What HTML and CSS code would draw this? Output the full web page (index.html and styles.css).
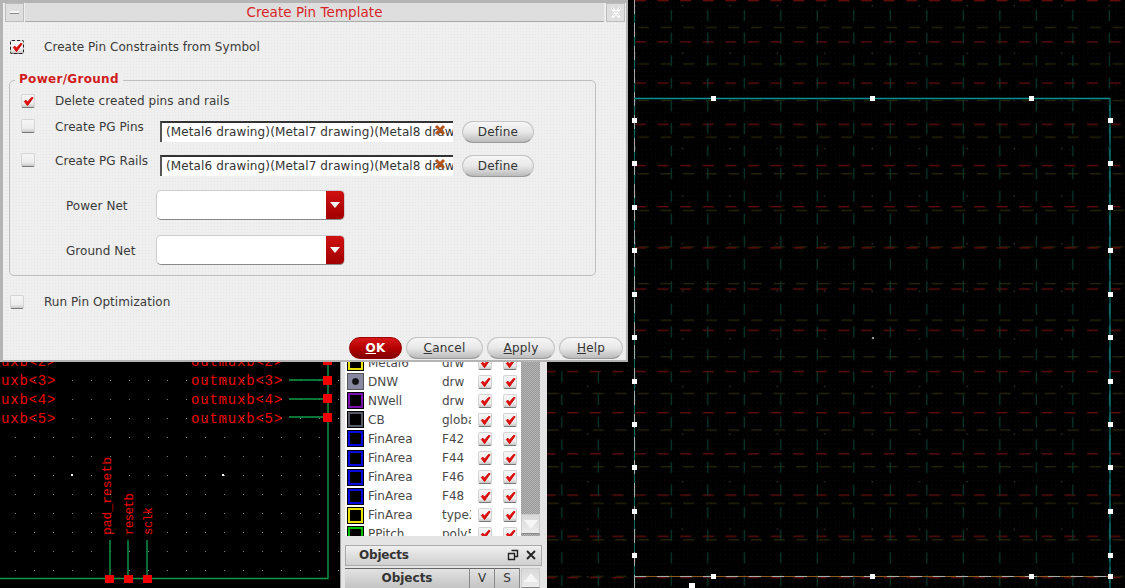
FILE: index.html
```html
<!DOCTYPE html>
<html lang="en">
<head>
<meta charset="utf-8">
<title>Create Pin Template</title>
<link rel="stylesheet" href="styles.css">
</head>
<body>
<svg width="0" height="0" class="defs">
  <defs>
    <symbol id="tick" viewBox="0 0 14 14"><path d="M2.5 7 L6 11.5 L12 3 L10.5 2.5 L6 7.5 L4 5.5 Z" fill="#e01010" stroke="#d00000" stroke-width=".9"/></symbol>
    <symbol id="cross" viewBox="0 0 12 12"><path d="M2 2 L10 10 M10 2 L2 10" stroke="#b5531c" stroke-width="3"/></symbol>
    <symbol id="arrow" viewBox="0 0 10 6"><path d="M0 0 H10 L5 6 Z" fill="#f4f4f4"/></symbol>
  </defs>
</svg>

<svg class="canvas canvas-right" width="578" height="588" viewBox="547 0 578 588">
  <defs>
    <pattern id="fine" width="4.6" height="4.6" patternUnits="userSpaceOnUse"><rect x="2" y="2" width="1" height="1" fill="#101010"/></pattern>
    <pattern id="red" width="22.6" height="41.2" patternUnits="userSpaceOnUse"><rect x="2.2" y="0" width="11" height="1.4" fill="#5e0c0c"/></pattern>
    <pattern id="olive" width="22.6" height="36.6" patternUnits="userSpaceOnUse"><rect x="5.2" y="27" width="11" height="1" fill="#33310a"/></pattern>
    <pattern id="green" width="36.5" height="22.6" patternUnits="userSpaceOnUse"><rect x="13.7" y="10" width="1.2" height="11" fill="#083a2e"/></pattern>
    <pattern id="spot" width="47.4" height="47.6" patternUnits="userSpaceOnUse"><rect x="18.4" y="5" width="1.2" height="1.2" fill="#444"/></pattern>
  </defs>
  <rect x="547" y="0" width="578" height="588" fill="#000"/>
  <rect x="547" y="0" width="578" height="588" fill="url(#fine)"/>
  <rect x="547" y="0" width="578" height="588" fill="url(#olive)"/>
  <rect x="547" y="0" width="578" height="588" fill="url(#red)"/>
  <rect x="547" y="0" width="578" height="588" fill="url(#green)"/>
  <rect x="547" y="0" width="578" height="588" fill="url(#spot)"/>
  <rect x="872" y="337" width="2" height="2" fill="#999"/>
  <path d="M634.5 0 V588" stroke="#0c6a60" stroke-width="1"/>
  <path d="M634.5 0 V588" stroke="#aaa" stroke-width="1" stroke-dasharray="14 9"/>
  <path d="M634 576.5 H1110" stroke="#8a5a20" stroke-width="1"/>
  <path d="M634 576.5 H1110" stroke="#aaa" stroke-width="1" stroke-dasharray="12 11"/>
  <path d="M634 98.5 H1110" stroke="#0e9090" stroke-width="1.4"/>
  <path d="M1110 98 V588" stroke="#0e7f7f" stroke-width="1.4"/>
  <path d="M1110 99 V588" stroke="#063a36" stroke-width="1.4" stroke-dasharray="6 16"/>
  <g fill="#fff">
    <rect x="711" y="96" width="5" height="5"/><rect x="870" y="96" width="5" height="5"/><rect x="1029" y="96" width="5" height="5"/>
    <rect x="632" y="118" width="5" height="5"/><rect x="632" y="161" width="5" height="5"/><rect x="632" y="205" width="5" height="5"/><rect x="632" y="248" width="5" height="5"/><rect x="632" y="292" width="5" height="5"/><rect x="632" y="335" width="5" height="5"/><rect x="632" y="379" width="5" height="5"/><rect x="632" y="422" width="5" height="5"/><rect x="632" y="465" width="5" height="5"/><rect x="632" y="509" width="5" height="5"/><rect x="632" y="553" width="5" height="5"/>
    <rect x="1108" y="118" width="5" height="5"/><rect x="1108" y="161" width="5" height="5"/><rect x="1108" y="205" width="5" height="5"/><rect x="1108" y="248" width="5" height="5"/><rect x="1108" y="292" width="5" height="5"/><rect x="1108" y="335" width="5" height="5"/><rect x="1108" y="379" width="5" height="5"/><rect x="1108" y="422" width="5" height="5"/><rect x="1108" y="465" width="5" height="5"/><rect x="1108" y="509" width="5" height="5"/><rect x="1108" y="553" width="5" height="5"/>
    <rect x="711" y="574" width="5" height="5"/><rect x="870" y="574" width="5" height="5"/><rect x="1029" y="574" width="5" height="5"/><rect x="1108" y="574" width="5" height="5"/>
    <rect x="689" y="583" width="6" height="5"/>
  </g>
</svg>

<svg class="canvas canvas-left" width="345" height="588" viewBox="0 0 345 588">
  <defs>
    <pattern id="dots" x="15" y="380" width="19" height="19" patternUnits="userSpaceOnUse"><rect x="0" y="0" width="1" height="1" fill="#7f7f8c"/></pattern>
  </defs>
  <rect width="345" height="588" fill="#000"/>
  <rect x="0" y="362" width="345" height="226" fill="url(#dots)"/>
  <rect x="71" y="474" width="2" height="2" fill="#fff"/><rect x="222" y="474" width="2" height="2" fill="#fff"/>
  <g stroke="#0f9a4a" stroke-width="1.4" fill="none">
    <path d="M328 340 V578.5 H0"/>
    <path d="M289 380 H328 M289 399 H328 M289 417 H328"/>
    <path d="M110 540 V578 M128 540 V578 M147 540 V578"/>
  </g>
  <g fill="#f00000">
    <rect x="323" y="356" width="9" height="9"/><rect x="323" y="376" width="9" height="9"/><rect x="323" y="394" width="9" height="9"/><rect x="323" y="413" width="9" height="9"/>
    <rect x="105" y="575" width="9" height="8"/><rect x="124" y="575" width="9" height="8"/><rect x="143" y="575" width="9" height="8"/>
  </g>
  <g class="pin-text">
    <text x="1" y="366">uxb&lt;2&gt;</text>
    <text x="1" y="385">uxb&lt;3&gt;</text>
    <text x="1" y="404">uxb&lt;4&gt;</text>
    <text x="1" y="423">uxb&lt;5&gt;</text>
    <text x="191" y="366">outmuxb&lt;2&gt;</text>
    <text x="191" y="385">outmuxb&lt;3&gt;</text>
    <text x="191" y="404">outmuxb&lt;4&gt;</text>
    <text x="191" y="423">outmuxb&lt;5&gt;</text>
  </g>
  <g class="pin-text pin-text-small">
    <text transform="translate(111 535) rotate(-90)">pad_resetb</text>
    <text class="pin-short" transform="translate(133 535) rotate(-90)">resetb</text>
    <text class="pin-short" transform="translate(152 535) rotate(-90)">sclk</text>
  </g>
</svg>

<aside class="palette">
  <div class="layers">
    <div class="layer-list">
      <div class="layer"><span class="swatch sw-yellow"></span><span class="name">Metal6</span><span class="type">drw</span><span class="check"><svg><use href="#tick"/></svg></span><span class="check"><svg><use href="#tick"/></svg></span></div>
      <div class="layer"><span class="swatch sw-dnw"></span><span class="name">DNW</span><span class="type">drw</span><span class="check"><svg><use href="#tick"/></svg></span><span class="check"><svg><use href="#tick"/></svg></span></div>
      <div class="layer"><span class="swatch sw-purple"></span><span class="name">NWell</span><span class="type">drw</span><span class="check"><svg><use href="#tick"/></svg></span><span class="check"><svg><use href="#tick"/></svg></span></div>
      <div class="layer"><span class="swatch sw-gray"></span><span class="name">CB</span><span class="type">global</span><span class="check"><svg><use href="#tick"/></svg></span><span class="check"><svg><use href="#tick"/></svg></span></div>
      <div class="layer"><span class="swatch sw-blue"></span><span class="name">FinArea</span><span class="type">F42</span><span class="check"><svg><use href="#tick"/></svg></span><span class="check"><svg><use href="#tick"/></svg></span></div>
      <div class="layer"><span class="swatch sw-blue"></span><span class="name">FinArea</span><span class="type">F44</span><span class="check"><svg><use href="#tick"/></svg></span><span class="check"><svg><use href="#tick"/></svg></span></div>
      <div class="layer"><span class="swatch sw-blue"></span><span class="name">FinArea</span><span class="type">F46</span><span class="check"><svg><use href="#tick"/></svg></span><span class="check"><svg><use href="#tick"/></svg></span></div>
      <div class="layer"><span class="swatch sw-blue"></span><span class="name">FinArea</span><span class="type">F48</span><span class="check"><svg><use href="#tick"/></svg></span><span class="check"><svg><use href="#tick"/></svg></span></div>
      <div class="layer"><span class="swatch sw-yellow"></span><span class="name">FinArea</span><span class="type">type3</span><span class="check"><svg><use href="#tick"/></svg></span><span class="check"><svg><use href="#tick"/></svg></span></div>
      <div class="layer"><span class="swatch sw-green"></span><span class="name">PPitch</span><span class="type">poly5</span><span class="check"><svg><use href="#tick"/></svg></span><span class="check"><svg><use href="#tick"/></svg></span></div>
    </div>
    <div class="scrollbar">
      <div class="scroll-track"></div>
      <div class="scroll-btn"><span class="tri tri-down"></span></div>
    </div>
  </div>
  <div class="dock-title">
    <span class="dock-name">Objects</span>
    <span class="dock-btn"><svg width="12" height="12" viewBox="0 0 12 12"><path d="M4.5 1.5 H10.5 V7.5 H8 M1.5 4.5 H7.5 V10.5 H1.5 Z" fill="none" stroke="#222" stroke-width="1.4"/></svg></span>
    <span class="dock-btn"><svg width="12" height="12" viewBox="0 0 12 12"><path d="M2 2 L10 10 M10 2 L2 10" stroke="#222" stroke-width="1.8"/></svg></span>
  </div>
  <div class="obj-head">
    <span class="obj-col obj-main">Objects</span>
    <span class="obj-col obj-v">V</span>
    <span class="obj-col obj-s">S</span>
    <span class="scroll-btn obj-up"><span class="tri tri-up"></span></span>
  </div>
</aside>

<section class="dialog">
  <header class="titlebar">
    <span class="tb-btn"><span class="tb-dash"></span></span>
    <h1 class="tb-title">Create Pin Template</h1>
    <span class="tb-btn tb-close">
      <svg width="14" height="14" viewBox="0 0 14 14"><path d="M3 2 L11 12 M11 2 L3 12" stroke="#fff" stroke-width="2.6"/><path d="M3 2 L11 12 M11 2 L3 12" stroke="#c4c4c4" stroke-width="1" stroke-dasharray="2 2"/></svg>
    </span>
  </header>

  <div class="body">
    <div class="row row-top">
      <span class="check check-focus"><svg><use href="#tick"/></svg></span>
      <span class="label label-top">Create Pin Constraints from Symbol</span>
    </div>

    <div class="group">
      <span class="legend">Power/Ground</span>
      <div class="row row-delete">
        <span class="check"><svg><use href="#tick"/></svg></span>
        <span class="label label-inner">Delete created pins and rails</span>
      </div>
      <div class="row row-field row-pins">
        <span class="check check-up"></span>
        <span class="label label-field">Create PG Pins</span>
        <span class="field">(Metal6 drawing)(Metal7 drawing)(Metal8 drawing)<svg class="clear"><use href="#cross"/></svg></span>
        <button class="btn btn-define">Define</button>
      </div>
      <div class="row row-field row-rails">
        <span class="check check-up"></span>
        <span class="label label-field">Create PG Rails</span>
        <span class="field">(Metal6 drawing)(Metal7 drawing)(Metal8 drawing)<svg class="clear"><use href="#cross"/></svg></span>
        <button class="btn btn-define">Define</button>
      </div>
      <div class="row row-combo row-power">
        <span class="label label-combo">Power Net</span>
        <span class="combo"><span class="combo-input"></span><span class="combo-arrow"><svg width="10" height="6"><use href="#arrow"/></svg></span></span>
      </div>
      <div class="row row-combo row-ground">
        <span class="label label-combo">Ground Net</span>
        <span class="combo"><span class="combo-input"></span><span class="combo-arrow"><svg width="10" height="6"><use href="#arrow"/></svg></span></span>
      </div>
    </div>

    <div class="row row-opt">
      <span class="check"></span>
      <span class="label label-top">Run Pin Optimization</span>
    </div>

    <footer class="actions">
      <button class="btn btn-ok"><u>O</u>K</button>
      <button class="btn btn-cancel"><u>C</u>ancel</button>
      <button class="btn btn-apply"><u>A</u>pply</button>
      <button class="btn btn-help"><u>H</u>elp</button>
    </footer>
  </div>
</section>
</body>
</html>
```

FILE: styles.css
```css
* { box-sizing: border-box; }
html, body { margin: 0; padding: 0; }
body {
  position: relative;
  width: 1125px;
  height: 588px;
  overflow: hidden;
  background: #000;
  font-family: "DejaVu Sans", sans-serif;
  font-size: 12px;
  color: #333;
}
.defs { position: absolute; }
.canvas { position: absolute; top: 0; display: block; }
.canvas-right { left: 547px; }
.canvas-left { left: 0; }
.pin-text text {
  font-family: "Liberation Mono", monospace;
  font-size: 14px;
  letter-spacing: 0.8px;
  fill: #f00000;
}
.pin-text-small text { font-size: 13px; letter-spacing: 0; }
.pin-text-small .pin-short { font-size: 12px; letter-spacing: -0.3px; }

/* layer palette */
.palette {
  position: absolute;
  left: 340px;
  top: 340px;
  width: 207px;
  height: 248px;
  padding: 13px 0 0 4px;
  background: #e4e4e4;
  border-left: 1px solid #999;
  display: flex;
  flex-direction: column;
}
.layers { display: flex; height: 183px; width: 195px; flex: none; }
.layer-list { width: 176px; background: #fff; overflow: hidden; padding-left: 2px; }
.layer {
  display: grid;
  grid-template-columns: 21px 74px 36px 25px 25px;
  align-items: center;
  height: 19.1px;
  color: #4a4a4a;
}
.swatch { width: 17px; height: 17px; background: #000; border: 1px solid #000; }
.sw-yellow { box-shadow: inset 0 0 0 2px #e8e000; }
.sw-purple { box-shadow: inset 0 0 0 2px #7a10b0; }
.sw-gray { box-shadow: inset 0 0 0 2px #555a66; }
.sw-blue { box-shadow: inset 0 0 0 2px #0808e0; }
.sw-green { box-shadow: inset 0 0 0 2px #00c000; }
.sw-dnw { background: radial-gradient(#111 30%, #8888a0 45%); border: 2px solid #8888a0; outline: 1px solid #555; outline-offset: -1px; }
.name { width: 46px; overflow: hidden; white-space: nowrap; }
.type { width: 29px; overflow: hidden; white-space: nowrap; }
.scrollbar { width: 19px; display: flex; flex-direction: column; background: repeating-conic-gradient(#999 0 25%, #b4b4b4 0 50%) 0 0 / 2px 2px; }
.scroll-track { flex: 1; }
.scroll-btn {
  width: 19px;
  height: 20px;
  display: flex;
  align-items: center;
  justify-content: center;
  background: linear-gradient(#d8d8d8, #ececec);
  border: 1px solid #ccc;
  border-bottom-color: #888;
}
.layers .scroll-btn { margin-bottom: 2px; }
.tri { width: 0; height: 0; border-left: 7px solid transparent; border-right: 7px solid transparent; }
.tri-down { border-top: 9px solid #f6f6f6; }
.tri-up { border-bottom: 9px solid #f6f6f6; }
.dock-title {
  display: flex;
  align-items: center;
  margin-top: 9px;
  width: 197px;
  height: 21px;
  padding: 0 3px 0 13px;
  gap: 3px;
  background: linear-gradient(#efefef, #cfcfcf);
  border: 1px solid #aaa;
  font-weight: bold;
  letter-spacing: -0.2px;
  color: #333;
}
.dock-name { flex: 1; }
.dock-btn {
  width: 15px;
  height: 15px;
  display: flex;
  align-items: center;
  justify-content: center;
}
.obj-head {
  display: flex;
  margin-top: 2px;
  width: 196px;
  height: 21px;
  font-weight: bold;
  color: #333;
}
.obj-col {
  display: flex;
  align-items: center;
  justify-content: center;
  background: linear-gradient(#e2e2e2, #c4c4c4);
  border-right: 1px solid #888;
  border-top: 1px solid #666;
}
.obj-main { width: 125px; }
.obj-v { width: 25px; font-weight: normal; }
.obj-s { width: 25px; font-weight: normal; }
.obj-up { flex: none; margin-left: 1px; }

/* dialog */
.dialog {
  position: absolute;
  left: 0;
  top: 0;
  width: 628px;
  height: 362px;
  background-color: #efefef;
  background-image: radial-gradient(#e6e6e6 0.6px, transparent 0.8px);
  background-size: 3px 3px;
  border: 3px solid #b4b4b4;
  border-right-width: 2px;
  border-bottom-width: 2px;
  display: flex;
  flex-direction: column;
}
.titlebar { display: flex; height: 19px; gap: 1px; padding: 0 1px 0 2px; flex: none; }
.tb-btn {
  width: 19px;
  display: flex;
  align-items: center;
  justify-content: center;
  background: #dedede;
  border: 1px solid #bdbdbd;
}
.tb-dash { width: 9px; height: 3px; background: #f6f6f6; border-bottom: 1px solid #888; }
.tb-title {
  flex: 1;
  margin: 0;
  text-align: center;
  font-size: 13.5px;
  font-weight: normal;
  line-height: 18px;
  color: #d91f26;
  background: #dedede;
  border-bottom: 1px solid #aaa;
  letter-spacing: 0.05px;
}
.tb-close { margin-left: 1px; }
.body { padding: 15px 0 0 7px; flex: 1; }
.row { display: flex; align-items: center; }
.row-top { height: 20px; }
.check {
  width: 14px;
  height: 14px;
  flex: none;
  display: block;
  border-radius: 2px;
  background: linear-gradient(#f6f6f6, #ececec 70%, #c8c8c8);
  border: 1px solid #d4d4d4;
  border-bottom: 1px solid #777;
}
.check svg { display: block; width: 13px; height: 13px; }
.check-focus { outline: 1px dashed #222; outline-offset: -1px; }
.label { white-space: nowrap; letter-spacing: 0.05px; color: #3a3a3a; }
.label-top { margin-left: 20px; }

.group {
  position: relative;
  width: 587px;
  height: 196px;
  margin: 23px 0 0 -1px;
  padding: 10px 0 0 11px;
  border: 1px solid #bfbfbf;
  border-radius: 5px;
}
.legend {
  position: absolute;
  left: 5px;
  top: -9px;
  padding: 0 4px 0 4px;
  font-weight: bold;
  font-size: 12px;
  letter-spacing: 0.3px;
  color: #d01c1c;
  background: #efefef;
  line-height: 15px;
}
.row-delete { height: 20px; }
.label-inner { margin-left: 20px; }
.row-field { align-items: flex-start; height: 22px; }
.row-pins { margin-top: 10px; }
.row-rails { margin-top: 12px; }
.check-up { margin-top: -2px; }
.label-field { margin-left: 20px; width: 105px; line-height: 14px; margin-top: -1px; }
.field {
  position: relative;
  display: block;
  width: 293px;
  height: 21px;
  padding: 2px 0 0 4px;
  line-height: 15px;
  background: #fff;
  border-top: 2px solid #333;
  border-left: 2px solid #555;
  overflow: hidden;
  white-space: nowrap;
  color: #333;
  letter-spacing: 0.12px;
}
.clear { position: absolute; right: 7px; top: 1px; width: 12px; height: 12px; }
.btn {
  font-family: "DejaVu Sans", sans-serif;
  font-size: 12px;
  letter-spacing: 0.2px;
  color: #333;
  height: 22px;
  padding: 0;
  border: 1px solid #c4c4c4;
  border-bottom-color: #999;
  border-radius: 11px;
  background: linear-gradient(#f6f6f6, #e8e8e8 50%, #bbb);
}
.btn-define { width: 72px; margin-left: 9px; }
.row-combo { height: 30px; padding-left: 45px; }
.row-power { margin-top: 13px; }
.row-ground { margin-top: 15px; }
.label-combo { width: 90px; margin-top: 1px; }
.combo {
  display: flex;
  width: 189px;
  height: 30px;
  margin-top: -1px;
  border: 1px solid #ccc;
  border-bottom: 1px solid #888;
  border-radius: 5px;
  overflow: hidden;
  background: #fff;
}
.combo-input { flex: 1; }
.combo-arrow {
  width: 18px;
  display: flex;
  align-items: center;
  justify-content: center;
  background: linear-gradient(#d01010, #a00000);
}
.combo-arrow svg { display: block; }
.row-opt { height: 20px; margin-top: 16px; }
.actions { display: flex; gap: 4px; margin: 25px 0 0 339px; }
.btn-ok {
  width: 53px;
  color: #fff;
  font-weight: bold;
  border-color: #900;
  background: linear-gradient(#d81818, #b00000 55%, #800000);
}
.btn-cancel { width: 77px; }
.btn-apply { width: 68px; }
.btn-help { width: 64px; }
```
